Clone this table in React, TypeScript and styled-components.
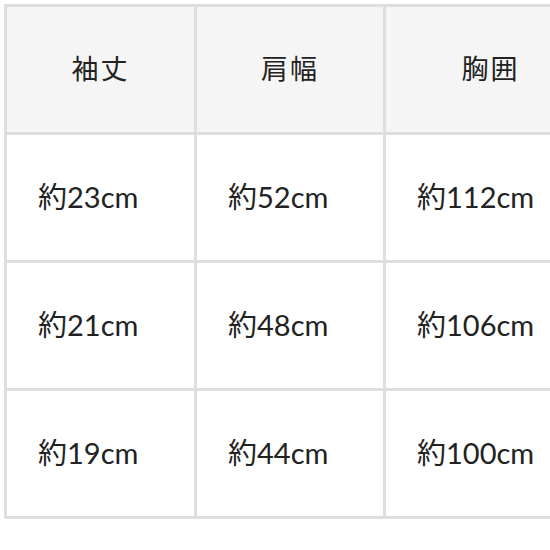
import styled, { createGlobalStyle } from "styled-components";

const GlobalStyle = createGlobalStyle`
  html, body {
    margin: 0;
    padding: 0;
    background: #ffffff;
    overflow: hidden;
  }
  body {
    font-family: Lato, "Noto Sans CJK JP", sans-serif;
  }
`;

const Page = styled.div`
  width: 550px;
  height: 550px;
  overflow: hidden;
  padding: 4px 0 0 4px;
  box-sizing: border-box;
`;

const Table = styled.div`
  display: grid;
  grid-template-columns: 190px 189px 212px;
  grid-auto-rows: 128px;
  width: max-content;
  border-top: 3px solid #dedede;
  border-left: 3px solid #dedede;
`;

const Cell = styled.div<{ $head?: boolean }>`
  box-sizing: border-box;
  display: flex;
  align-items: center;
  justify-content: ${(p) => (p.$head ? "center" : "flex-start")};
  padding-left: ${(p) => (p.$head ? "0" : "31px")};
  padding-bottom: ${(p) => (p.$head ? "4px" : "6px")};
  border-right: 3px solid #dedede;
  border-bottom: 3px solid #dedede;
  background: ${(p) => (p.$head ? "#f5f5f5" : "#ffffff")};
  color: #222222;
  font-size: ${(p) => (p.$head ? "27px" : "29px")};
  letter-spacing: ${(p) => (p.$head ? "2px" : "0")};
  white-space: nowrap;
`;

const headers = ["袖丈", "肩幅", "胸囲"];
const rows = [
  ["約23cm", "約52cm", "約112cm"],
  ["約21cm", "約48cm", "約106cm"],
  ["約19cm", "約44cm", "約100cm"],
];

export default function App() {
  return (
    <>
      <GlobalStyle />
      <Page>
        <Table>
          {headers.map((h) => (
            <Cell $head key={h}>
              {h}
            </Cell>
          ))}
          {rows.map((r, i) =>
            r.map((v, j) => <Cell key={`${i}-${j}`}>{v}</Cell>)
          )}
        </Table>
      </Page>
    </>
  );
}
